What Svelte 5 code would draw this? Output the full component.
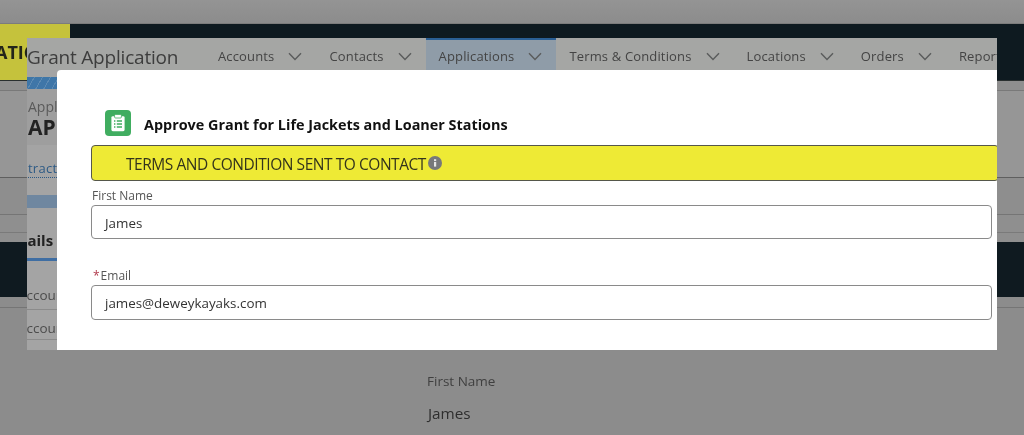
<script>
  const tabs = [
    { label: 'Accounts' },
    { label: 'Contacts' },
    { label: 'Applications', active: true },
    { label: 'Terms & Conditions' },
    { label: 'Locations' },
    { label: 'Orders' },
    { label: 'Reports' }
  ];
</script>

<div class="stage">
  <div class="page">
    <div class="brand">
      <div class="chip"><span>ATIC</span></div>
    </div>
    <div class="band-a"></div>
    <div class="band-b"></div>
    <div class="band-c"></div>
    <div class="band-d"></div>
    <div class="band-e"></div>
    <div class="dark"></div>
    <div class="band-f"></div>
    <div class="detail">
      <div class="detail-label">First Name</div>
      <div class="detail-value">James</div>
    </div>
  </div>

  <section class="panel">
    <nav class="nav">
      <div class="app">Grant Application</div>
      <ul class="tabs">
        {#each tabs as tab}
          <li class="tab" class:active={tab.active}>
            <span>{tab.label}</span>
            <svg class="chev" viewBox="0 0 14 9" width="14" height="9"><path d="M1 1.2 7 7.6 13 1.2" fill="none" stroke="#5a5c5c" stroke-width="1.4" /></svg>
          </li>
        {/each}
      </ul>
    </nav>

    <div class="body">
      <aside class="strip">
        <div class="stripe"></div>
        <div class="heading">
          <div class="crumb">Applications</div>
          <div class="record">APPLICATION</div>
        </div>
        <div class="lower">
          <div class="link"><span>Contract</span></div>
          <div class="bluebar"></div>
          <div class="sub"><span>Details</span></div>
          <div class="row"><span>Account</span></div>
          <div class="row"><span>Account</span></div>
        </div>
      </aside>

      <div class="modal">
        <header class="head">
          <svg class="icon" viewBox="0 0 26 26" width="26" height="26">
            <rect width="26" height="26" rx="4" fill="#40ad60" />
            <rect x="6.4" y="6.2" width="13.2" height="15" rx="1.4" fill="#fff" />
            <rect x="9.6" y="4.4" width="6.8" height="3.6" rx="1" fill="#fff" stroke="#40ad60" stroke-width=".8" />
            <path d="M9 11h1.4M9 14h1.4M9 17h1.4M11.8 11h5.2M11.8 14h5.2M11.8 17h5.2" stroke="#40ad60" stroke-width="1.5" />
          </svg>
          <h2>Approve Grant for Life Jackets and Loaner Stations</h2>
        </header>

        <div class="banner">
          <span>TERMS AND CONDITION SENT TO CONTACT</span>
          <svg viewBox="0 0 14 14" width="14" height="14"><circle cx="7" cy="7" r="7" fill="#77787a" /><rect x="6" y="6" width="2.2" height="4.6" fill="#e6e6e6" /><rect x="6" y="3.2" width="2.2" height="1.9" fill="#e6e6e6" /></svg>
        </div>

        <div class="field first">
          <div class="label">First Name</div>
          <div class="input">James</div>
        </div>
        <div class="field second">
          <div class="label"><i>*</i>Email</div>
          <div class="input tall">james@deweykayaks.com</div>
        </div>
      </div>
    </div>
  </section>
</div>

<style>
  :global(body) {
    margin: 0;
    background: #8c8c8c;
  }
  .stage {
    position: relative;
    width: 1024px;
    height: 435px;
    overflow: hidden;
    font-family: "Open Sans", "Noto Sans", sans-serif;
    color: #3a3a3a;
    filter: blur(.3px);
  }
  .page {
    padding-top: 23px;
    background: linear-gradient(#949494, #8c8c8c 23px);
  }
  .brand {
    height: 56px;
    background: #0e1a20;
    border-top: 1px solid #7c7c7c;
    border-bottom: 1px solid #2a3030;
  }
  .chip {
    width: 70px;
    height: 56px;
    background: #c5c23c;
    display: flex;
    align-items: center;
    overflow: hidden;
  }
  .chip span {
    margin-left: -5px;
    font-weight: 700;
    font-size: 18px;
    color: #23251a;
  }
  .band-a { height: 9px; background: #8f8f8f; border-bottom: 1px solid #797979; }
  .band-b { height: 86px; background: #969696; border-bottom: 1px solid #5f5f5f; }
  .band-c { height: 36px; background: #8e8e8e; border-bottom: 1px solid #757575; }
  .band-d { height: 17px; background: #8f8f8f; border-bottom: 1px solid #7a7a7a; }
  .band-e { height: 9px; background: #8f8f8f; }
  .dark { height: 55px; background: #0f1a20; }
  .band-f { height: 10px; border-bottom: 1px solid #757575; background: #8c8c8c; }
  .detail {
    padding: 65px 0 0 427px;
  }
  .detail-label { font-size: 13.5px; line-height: 17px; color: #3f3f3f; }
  .detail-value { font-size: 15.3px; line-height: 20px; margin-top: 13px; padding-left: 1px; color: #2e2e2e; }

  .panel {
    position: absolute;
    left: 27px;
    top: 38px;
    width: 970px;
    height: 312px;
    display: flex;
    flex-direction: column;
    overflow: hidden;
    background: #a4a4a4;
  }
  .nav {
    height: 32px;
    display: flex;
    background: #a5a6a4;
    flex: none;
  }
  .app {
    flex: none;
    font-size: 19px;
    line-height: 38px;
    height: 32px;
    letter-spacing: -.2px;
    white-space: nowrap;
    width: 178px;
    color: #3d3d3d;
  }
  .tabs {
    flex: none;
    list-style: none;
    margin: 0;
    padding: 0;
    display: flex;
    white-space: nowrap;
  }
  .tab {
    display: flex;
    align-items: center;
    gap: 14px;
    padding: 4px 14px 0 13px;
    font-size: 13px;
    letter-spacing: .15px;
    color: #444;
  }
  .tab.active {
    background: #8f9ca8;
    border-top: 2px solid #2a5f94;
    padding-top: 2px;
  }

  .body {
    flex: 1;
    display: flex;
    min-height: 0;
  }
  .strip {
    width: 30px;
    flex: none;
    overflow: hidden;
    display: flex;
    flex-direction: column;
    white-space: nowrap;
  }
  .stripe {
    height: 12px;
    margin-top: 7px;
    flex: none;
    background: repeating-linear-gradient(120deg, #3f76a8 0 6px, #5d8ab3 6px 7px);
  }
  .heading {
    height: 56px;
    flex: none;
    background: #9e9e9e;
    padding-left: 1px;
  }
  .crumb { font-size: 14px; line-height: 18px; margin-top: 9px; color: #5a5a5a; }
  .record { font-size: 21px; line-height: 22px; font-weight: 700; color: #222; }
  .lower { flex: 1; }
  .link {
    font-size: 13px;
    line-height: 17px;
    margin: 15px 0 0 -24px;
    height: 21px;
  }
  .link span {
    color: #2d5a85;
    border-bottom: 1px dotted #2d5a85;
    letter-spacing: .3px;
  }
  .bluebar {
    height: 13px;
    margin-top: 14px;
    background: #6f87a0;
  }
  .sub {
    font-size: 15px;
    font-weight: 700;
    line-height: 22px;
    margin-top: 21px;
    height: 29px;
    color: #222;
    border-bottom: 3px solid #3f6ea3;
  }
  .sub span { display: block; margin-left: -26px; }
  .row {
    font-size: 13.5px;
    line-height: 30px;
    height: 29px;
    color: #4c4c4c;
    border-bottom: 1px solid #8b8b8b;
  }
  .row span { display: block; margin-left: -9px; }
  .sub + .row { margin-top: 19px; }
  .row + .row { line-height: 36px; }

  .modal {
    flex: 1;
    background: #fff;
    border-top-left-radius: 4px;
    padding: 40px 5px 0 34px;
    overflow: hidden;
    min-width: 0;
  }
  .head {
    display: flex;
    align-items: center;
    gap: 13px;
    margin-left: 14px;
    height: 26px;
  }
  .icon { flex: none; }
  h2 {
    margin: 3px 0 0;
    font-size: 14.4px;
    font-weight: 700;
    line-height: 26px;
    color: #111;
    white-space: nowrap;
  }
  .banner {
    margin: 9px -7px 0 0;
    height: 34px;
    display: flex;
    align-items: center;
    gap: 2px;
    padding-left: 34px;
    background: #eeea35;
    border: 1px solid #55574a;
    border-radius: 4px;
    color: #33341c;
    font-size: 15.5px;
    letter-spacing: -.45px;
  }
  .banner span { padding-top: 2px; }
  .first { margin-top: 5px; }
  .second { margin-top: 27px; }
  .label {
    font-size: 12px;
    line-height: 20px;
    height: 19px;
    padding-left: 1px;
    color: #555;
  }
  .label i {
    font-style: normal;
    color: #b0384a;
    margin: 0 1px 0 1px;
  }
  .input {
    height: 32px;
    line-height: 34px;
    border: 1px solid #8a8a8a;
    border-radius: 4px;
    padding-left: 13px;
    font-size: 13.4px;
    color: #333;
  }
  .input.tall { height: 33px; }
</style>
